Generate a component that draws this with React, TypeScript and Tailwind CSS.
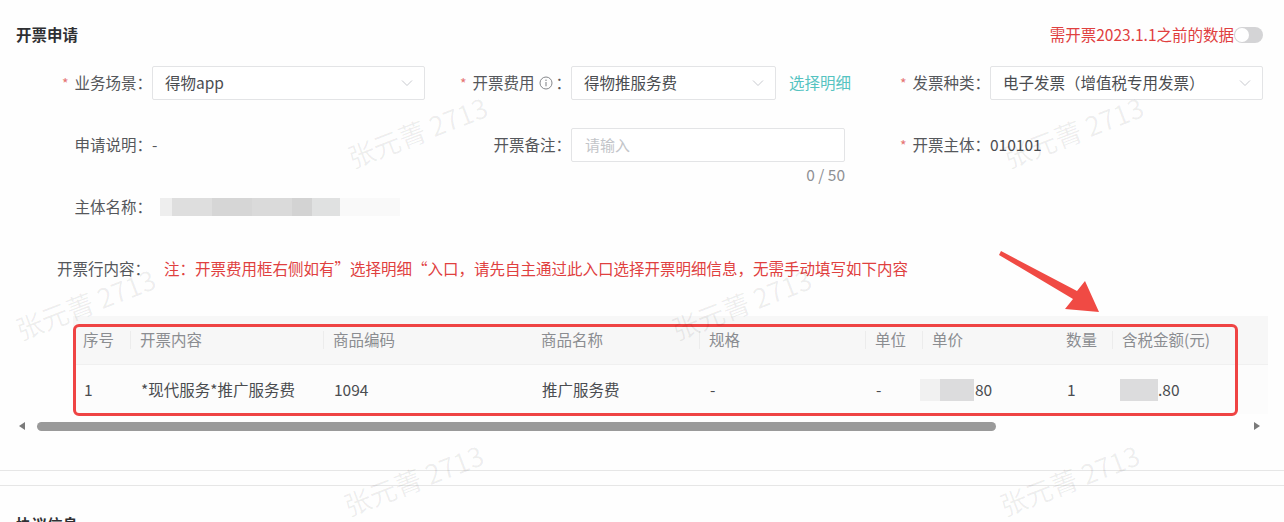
import React from 'react';

const FONT = { fontFamily: '"Noto Sans CJK SC", "Noto Sans", sans-serif' };

function Chevron() {
  return (
    <svg width="14" height="14" viewBox="0 0 14 14" fill="none">
      <polyline points="2,4.5 7,9.5 12,4.5" stroke="#c8cacf" strokeWidth="1" />
    </svg>
  );
}

function InfoIcon() {
  return (
    <svg width="14" height="14" viewBox="0 0 14 14" fill="none" className="ml-[5px] mr-[2px]">
      <circle cx="7" cy="7" r="6" stroke="#85878b" strokeWidth="1" />
      <line x1="7" y1="6" x2="7" y2="10.2" stroke="#85878b" strokeWidth="1.1" />
      <circle cx="7" cy="4.2" r="0.75" fill="#85878b" />
    </svg>
  );
}

function Label({ text, required, info }: { text: string; required?: boolean; info?: boolean }) {
  return (
    <div className="w-[152px] shrink-0 flex items-center justify-end whitespace-nowrap text-[15.5px] text-[#55575b]">
      {required && <span className="text-[#e57373] mr-[6px] text-[14px]">*</span>}
      <span>{text}</span>
      {info && <InfoIcon />}
      <span>：</span>
    </div>
  );
}

function Select({ value, width }: { value: string; width: string }) {
  return (
    <div className={`${width} shrink-0 h-[34px] border border-[#e3e4e6] rounded-[2px] bg-white flex items-center justify-between pl-[12px] pr-[10px] text-[15.5px] text-[#4a4c50] whitespace-nowrap`}>
      <span>{value}</span>
      <Chevron />
    </div>
  );
}

function Watermark({ x, y, size = 27 }: { x: number; y: number; size?: number }) {
  return (
    <div
      className="absolute pointer-events-none whitespace-nowrap text-[rgba(0,0,0,0.065)] -rotate-[21deg]"
      style={{ left: x, top: y, fontSize: size }}
    >
      张元菁 2713
    </div>
  );
}

const cols = [
  { h: '序号', b: '1', w: 'w-[57px]', sep: false },
  { h: '开票内容', b: '*现代服务*推广服务费', w: 'w-[193px]', sep: true },
  { h: '商品编码', b: '1094', w: 'w-[208px]', sep: true },
  { h: '商品名称', b: '推广服务费', w: 'w-[168px]', sep: false },
  { h: '规格', b: '-', w: 'w-[166px]', sep: true },
  { h: '单位', b: '-', w: 'w-[57px]', sep: true },
  { h: '单价', b: 'price', w: 'w-[134px]', sep: true },
  { h: '数量', b: '1', w: 'w-[56px]', sep: false },
  { h: '含税金额(元)', b: 'total', w: 'w-[156px]', sep: true },
];

export default function App() {
  return (
    <div className="relative w-[1284px] h-[522px] overflow-hidden bg-[#fefefe]" style={FONT}>
      {/* header */}
      <div className="flex items-center justify-between pl-[16px] pr-[21px] pt-[24px] h-[66px] pb-[20px]">
        <div className="text-[15.5px] font-bold text-[#2f3033]">开票申请</div>
        <div className="flex items-center">
          <span className="text-[15.5px] text-[#e0403f] whitespace-nowrap">需开票2023.1.1之前的数据</span>
          <div className="w-[29px] h-[16px] rounded-full bg-[#d4d4d6] flex items-center px-[1px]">
            <div className="w-[14px] h-[14px] rounded-full bg-white" />
          </div>
        </div>
      </div>

      {/* form */}
      <div className="grid grid-cols-[419px_419px_446px]">
        <div className="flex items-center h-[34px]">
          <Label text="业务场景" required />
          <Select value="得物app" width="w-[273px]" />
        </div>
        <div className="flex items-center h-[34px]">
          <Label text="开票费用" required info />
          <Select value="得物推服务费" width="w-[205px]" />
          <span className="ml-[13px] text-[15.5px] text-[#55c3c1] whitespace-nowrap">选择明细</span>
        </div>
        <div className="flex items-center h-[34px]">
          <Label text="发票种类" required />
          <Select value="电子发票（增值税专用发票）" width="w-[273px]" />
        </div>
      </div>

      <div className="grid grid-cols-[419px_419px_446px] mt-[28px]">
        <div className="flex items-center h-[34px] text-[15.5px] text-[#55575b]">
          <Label text="申请说明" />
          <span>-</span>
        </div>
        <div className="flex flex-col">
          <div className="flex items-center h-[34px]">
            <Label text="开票备注" />
            <div className="w-[274px] shrink-0 h-[34px] border border-[#e3e4e6] rounded-[2px] bg-white flex items-center pl-[13px] text-[15px] text-[#c3c5c9]">
              请输入
            </div>
          </div>
          <div className="w-[426px] text-right text-[15.5px] text-[#8e9094] h-[30px] leading-[24px]">0 / 50</div>
        </div>
        <div className="flex items-center h-[34px] text-[15.5px] text-[#4a4c50]">
          <Label text="开票主体" required />
          <span>010101</span>
        </div>
      </div>

      <div className="flex items-center h-[34px] -mt-[2px]">
        <Label text="主体名称" />
        <div className="flex h-[18px] ml-[8px]">
          <div className="w-[12px] bg-[#eeeeee]" />
          <div className="w-[40px] bg-[#dedede]" />
          <div className="w-[40px] bg-[#d6d6d6]" />
          <div className="w-[40px] bg-[#dadada]" />
          <div className="w-[20px] bg-[#d3d3d3]" />
          <div className="w-[28px] bg-[#e0e1e1]" />
          <div className="w-[60px] bg-[#f9f9f9]" />
        </div>
      </div>

      <div className="flex items-center h-[34px] mt-[28px]">
        <div className="w-[150px] shrink-0 text-right text-[15.5px] text-[#55575b] whitespace-nowrap">开票行内容：</div>
        <div className="ml-[14px] text-[15.5px] text-[#e0403f] whitespace-nowrap">
          注：开票费用框右侧如有”选择明细“入口，请先自主通过此入口选择开票明细信息，无需手动填写如下内容
        </div>
      </div>

      {/* table */}
      <div className="relative ml-[73px] mt-[30px] w-[1195px]">
        <div className="flex h-[48px] bg-[#f7f7f7] items-center text-[15.5px] text-[#8b8d91] whitespace-nowrap">
          {cols.map((c, i) => (
            <div key={i} className={`${c.w} h-full flex items-center pl-[10px] relative`}>
              {c.sep && <div className="absolute left-0 top-[15px] h-[18px] w-px bg-[#ececec]" />}
              {c.h}
            </div>
          ))}
        </div>
        <div className="flex h-[50px] bg-[#fcfcfc] items-center text-[15.5px] text-[#4a4c50] border-t border-[#f0f0f0] whitespace-nowrap">
          {cols.map((c, i) => (
            <div key={i} className={`${c.w} h-full flex items-center pl-[11px]`}>
              {c.b === 'price' ? (
                <div className="flex items-center -ml-[13px]">
                  <div className="w-[20px] h-[22px] bg-[#f1f1f1]" />
                  <div className="w-[34px] h-[22px] bg-[#dcdcdd]" />
                  <span className="ml-[1px]">80</span>
                </div>
              ) : c.b === 'total' ? (
                <div className="flex items-center -ml-[3px]">
                  <div className="w-[38px] h-[22px] bg-[#dcdcdd]" />
                  <span>.80</span>
                </div>
              ) : (
                c.b
              )}
            </div>
          ))}
        </div>
        <div className="absolute left-0 top-[8px] w-[1165px] h-[92px] border-[3px] border-[#ef4444] rounded-[6px]" />
      </div>

      {/* scrollbar */}
      <div className="flex items-center h-[10px] mt-[7px] pl-[19px]">
        <svg width="6" height="8" viewBox="0 0 6 8"><polygon points="6,0 6,8 0,4" fill="#7a7a7a" /></svg>
        <div className="ml-[12px] w-[959px] h-[9px] rounded-full bg-[#9a9a9a]" />
        <div className="w-[258px]" />
        <svg width="6" height="8" viewBox="0 0 6 8"><polygon points="0,0 0,8 6,4" fill="#7a7a7a" /></svg>
      </div>

      {/* dividers */}
      <div className="mt-[39px] h-px bg-[#e6e6e6]" />
      <div className="mt-[14px] h-px bg-[#e6e6e6]" />
      <div className="mt-[27px] pl-[16px] text-[15.5px] font-bold text-[#2f3033]">协议信息</div>

      {/* annotation arrow */}
      <svg className="absolute left-0 top-0 pointer-events-none" width="1284" height="522">
        <polygon
          points="1001,251 1077,291 1085,281 1099,312 1065,309 1073,299 999,255"
          fill="#f04a44"
        />
      </svg>

      {/* watermarks */}
      <Watermark x={344} y={112} />
      <Watermark x={1000} y={112} />
      <Watermark x={12} y={284} />
      <Watermark x={668} y={284} />
      <Watermark x={340} y={460} />
      <Watermark x={996} y={460} />
    </div>
  );
}
